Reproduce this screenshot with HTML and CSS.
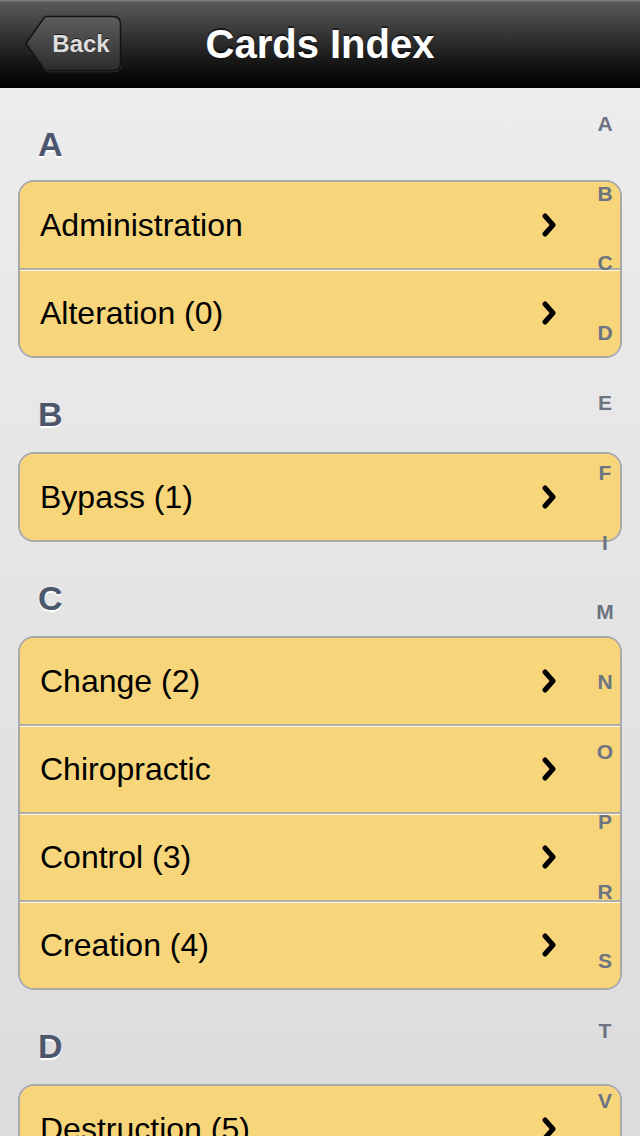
FILE: index.html
```html
<!DOCTYPE html>
<html lang="en">
<head>
<meta charset="utf-8">
<title>Cards Index</title>
<link rel="stylesheet" href="styles.css">
</head>
<body>
<div class="screen">
  <header class="navbar">
    <div class="nav-left">
      <a class="back-btn" href="#">
        <svg class="back-shape" viewBox="0 0 98 58" width="98" height="58" aria-hidden="true">
          <defs>
            <linearGradient id="bg" x1="0" y1="0" x2="0" y2="1">
              <stop offset="0" stop-color="#5e5e5e"/>
              <stop offset="1" stop-color="#2c2c2c"/>
            </linearGradient>
          </defs>
          <path d="M21 1.5 H89 Q96.5 1.5 96.5 9 V48 Q96.5 55.5 89 55.5 H21 L2 28.5 Z" fill="url(#bg)" stroke="#141414" stroke-width="1.5" stroke-linejoin="round"/>
          <path d="M21 56.8 H89 Q97 56.8 97.6 50" fill="none" stroke="rgba(255,255,255,0.12)" stroke-width="1"/>
        </svg>
        <span class="back-label">Back</span>
      </a>
    </div>
    <h1 class="nav-title">Cards Index</h1>
    <div class="nav-right"></div>
  </header>

  <main class="content">
    <section class="section">
      <h2 class="section-header">A</h2>
      <ul class="card">
        <li class="row"><span class="row-label">Administration</span><svg class="chev" viewBox="0 0 14 24" width="14" height="24"><polyline points="3,3 11,12 3,21"/></svg></li>
        <li class="row"><span class="row-label">Alteration (0)</span><svg class="chev" viewBox="0 0 14 24" width="14" height="24"><polyline points="3,3 11,12 3,21"/></svg></li>
      </ul>
    </section>
    <section class="section">
      <h2 class="section-header">B</h2>
      <ul class="card">
        <li class="row"><span class="row-label">Bypass (1)</span><svg class="chev" viewBox="0 0 14 24" width="14" height="24"><polyline points="3,3 11,12 3,21"/></svg></li>
      </ul>
    </section>
    <section class="section">
      <h2 class="section-header">C</h2>
      <ul class="card">
        <li class="row"><span class="row-label">Change (2)</span><svg class="chev" viewBox="0 0 14 24" width="14" height="24"><polyline points="3,3 11,12 3,21"/></svg></li>
        <li class="row"><span class="row-label">Chiropractic</span><svg class="chev" viewBox="0 0 14 24" width="14" height="24"><polyline points="3,3 11,12 3,21"/></svg></li>
        <li class="row"><span class="row-label">Control (3)</span><svg class="chev" viewBox="0 0 14 24" width="14" height="24"><polyline points="3,3 11,12 3,21"/></svg></li>
        <li class="row"><span class="row-label">Creation (4)</span><svg class="chev" viewBox="0 0 14 24" width="14" height="24"><polyline points="3,3 11,12 3,21"/></svg></li>
      </ul>
    </section>
    <section class="section">
      <h2 class="section-header">D</h2>
      <ul class="card">
        <li class="row"><span class="row-label">Destruction (5)</span><svg class="chev" viewBox="0 0 14 24" width="14" height="24"><polyline points="3,3 11,12 3,21"/></svg></li>
      </ul>
    </section>
  </main>

  <nav class="index-bar">
    <span>A</span><span>B</span><span>C</span><span>D</span><span>E</span><span>F</span><span>I</span><span>M</span><span>N</span><span>O</span><span>P</span><span>R</span><span>S</span><span>T</span><span>V</span>
  </nav>
</div>
</body>
</html>
```

FILE: styles.css
```css
html, body {
  margin: 0;
  padding: 0;
}

body {
  width: 640px;
  height: 1136px;
  overflow: hidden;
  font-family: "Liberation Sans", Arial, Helvetica, sans-serif;
}

.screen {
  position: relative;
  width: 640px;
  height: 1136px;
  overflow: hidden;
  display: flex;
  flex-direction: column;
  background: linear-gradient(#ededed 0, #ececec 10%, #dcdcde 100%);
}

/* Navigation bar */
.navbar {
  flex: 0 0 88px;
  height: 88px;
  box-sizing: border-box;
  display: grid;
  grid-template-columns: 1fr auto 1fr;
  align-items: center;
  background: linear-gradient(#8c8c8c 0, #5a5a5a 2px, #3e3e3e 30%, #1c1c1c 65%, #000 100%);
  border-bottom: 1px solid #000;
}

.nav-left {
  display: flex;
  align-items: center;
  padding-left: 24px;
  padding-top: 1px;
}

.back-btn {
  position: relative;
  display: flex;
  align-items: center;
  justify-content: center;
  width: 98px;
  height: 58px;
  text-decoration: none;
}

.back-shape {
  position: absolute;
  left: 0;
  top: 0;
}

.back-label {
  position: relative;
  padding-left: 16px;
  font-size: 24px;
  font-weight: bold;
  color: #dedede;
  text-shadow: 0 -1px 0 rgba(0, 0, 0, 0.6);
}

.nav-title {
  margin: 0;
  font-size: 40px;
  font-weight: bold;
  color: #fff;
  text-shadow: 0 -2px 0 rgba(0, 0, 0, 0.55);
  line-height: 48px;
}

/* Content */
.content {
  flex: 1 1 auto;
}

.section-header {
  margin: 0;
  padding: 36px 0 18px 38px;
  font-size: 34px;
  line-height: 40px;
  font-weight: bold;
  color: #4c566c;
  text-shadow: 0 2px 0 #fff;
}

.section:first-child .section-header {
  padding-bottom: 16px;
}

.card {
  list-style: none;
  margin: 0 18px;
  padding: 0;
  border: 2px solid #a9a9a9;
  border-radius: 16px;
  overflow: hidden;
  background: #f7d57a;
}

.row {
  height: 86px;
  display: flex;
  align-items: center;
  justify-content: space-between;
  padding: 0 64px 0 20px;
  background: #f7d57a;
}

.row + .row {
  border-top: 2px solid #b1aea6;
  box-shadow: inset 0 1px 0 #fff8ea;
}

.row-label {
  font-size: 32px;
  color: #000;
}

.chev {
  display: block;
  fill: none;
  stroke: #000;
  stroke-width: 5;
  stroke-linecap: round;
  stroke-linejoin: round;
}

/* Section index */
.index-bar {
  position: absolute;
  top: 89px;
  right: 0;
  width: 70px;
  display: flex;
  flex-direction: column;
  align-items: center;
}

.index-bar span {
  height: 69.8px;
  display: flex;
  align-items: center;
  justify-content: center;
  font-size: 21px;
  font-weight: bold;
  color: #6c7381;
}
```
